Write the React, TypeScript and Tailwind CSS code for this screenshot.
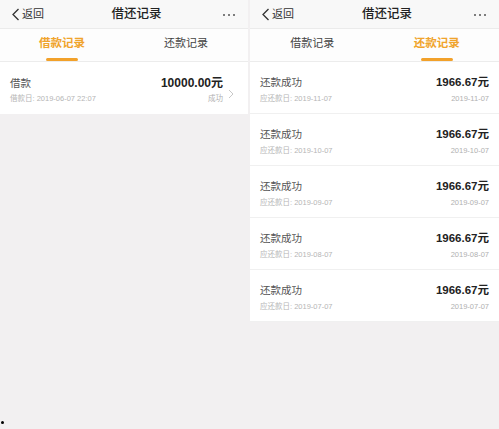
import React from 'react';

const font = { fontFamily: '"Liberation Sans", "Noto Sans CJK SC", sans-serif' };

const Header = () => (
  <div className="h-[29px] bg-[#f8f8f8] border-b border-[#ebebeb] flex items-center justify-between px-[11px] pt-[1px]">
    <div className="flex items-center gap-[2px] text-[11px] text-[#333]">
      <svg width="9" height="13" viewBox="0 0 9 13" fill="none">
        <path d="M7.5 1L2 6.5L7.5 12" stroke="#333" strokeWidth="1.3" />
      </svg>
      <span>返回</span>
    </div>
    <div className="text-[12.5px] font-medium text-[#222] pl-[6px]">借还记录</div>
    <div className="flex items-center gap-[3px] pr-[2px]">
      <span className="w-[2px] h-[2px] rounded-full bg-[#555]" />
      <span className="w-[2px] h-[2px] rounded-full bg-[#555]" />
      <span className="w-[2px] h-[2px] rounded-full bg-[#555]" />
    </div>
  </div>
);

const Tabs = ({ active }: { active: 0 | 1 }) => (
  <div className="h-[33px] bg-[#fdfdfd] border-b border-[#ececec] grid grid-cols-2">
    {['借款记录', '还款记录'].map((t, i) => (
      <div key={t} className="flex flex-col items-center justify-end">
        <span
          className={
            i === active
              ? 'text-[11.5px] font-bold text-[#f0a42c] leading-none'
              : 'text-[11px] text-[#444] leading-none'
          }
        >
          {t}
        </span>
        <span
          className={
            i === active
              ? 'mt-[9px] w-[32px] h-[3px] rounded-full bg-[#f2a12a]'
              : 'mt-[9px] w-[32px] h-[3px] bg-transparent'
          }
        />
      </div>
    ))}
  </div>
);

const LoanRow = () => (
  <div className="h-[52px] bg-white flex items-center pl-[10px] pr-[14px] pt-[4px]">
    <div className="flex-1 flex flex-col gap-[7px]">
      <span className="text-[10.5px] text-[#555] leading-none">借款</span>
      <span className="text-[7.5px] text-[#b5b5b5] leading-none">借款日: 2019-06-07 22:07</span>
    </div>
    <div className="flex flex-col items-end gap-[6px]">
      <span className="text-[12px] font-bold text-[#222] leading-none">10000.00元</span>
      <span className="text-[7.5px] text-[#b0b0b0] leading-none">成功</span>
    </div>
    <svg className="ml-[5px] mt-[8px]" width="6" height="10" viewBox="0 0 6 10" fill="none">
      <path d="M1 1L5 5L1 9" stroke="#c8c8c8" strokeWidth="1" />
    </svg>
  </div>
);

const RepayRow = ({ date }: { date: string }) => (
  <div className="h-[52px] bg-white border-b border-[#f0f0f0] flex items-center pl-[10px] pr-[10px] pt-[4px]">
    <div className="flex-1 flex flex-col gap-[7px]">
      <span className="text-[10.5px] text-[#555] leading-none">还款成功</span>
      <span className="text-[7.5px] text-[#b5b5b5] leading-none">应还款日: {date}</span>
    </div>
    <div className="flex flex-col items-end gap-[6px]">
      <span className="text-[11.5px] font-bold text-[#222] leading-none">1966.67元</span>
      <span className="text-[7.5px] text-[#b0b0b0] leading-none">{date}</span>
    </div>
  </div>
);

export default function App() {
  const dates = ['2019-11-07', '2019-10-07', '2019-09-07', '2019-08-07', '2019-07-07'];
  return (
    <div className="w-[499px] h-[429px] bg-[#f2f0f1] flex flex-col" style={font}>
      <div className="flex gap-[2px]">
        <div className="w-[248px] flex flex-col">
          <Header />
          <Tabs active={0} />
          <LoanRow />
        </div>
        <div className="flex-1 flex flex-col">
          <Header />
          <Tabs active={1} />
          {dates.map((d) => (
            <RepayRow key={d} date={d} />
          ))}
        </div>
      </div>
      <div className="mt-auto pl-[1px] pb-[5px]">
        <span className="block w-[3px] h-[3px] rounded-full bg-black" />
      </div>
    </div>
  );
}
